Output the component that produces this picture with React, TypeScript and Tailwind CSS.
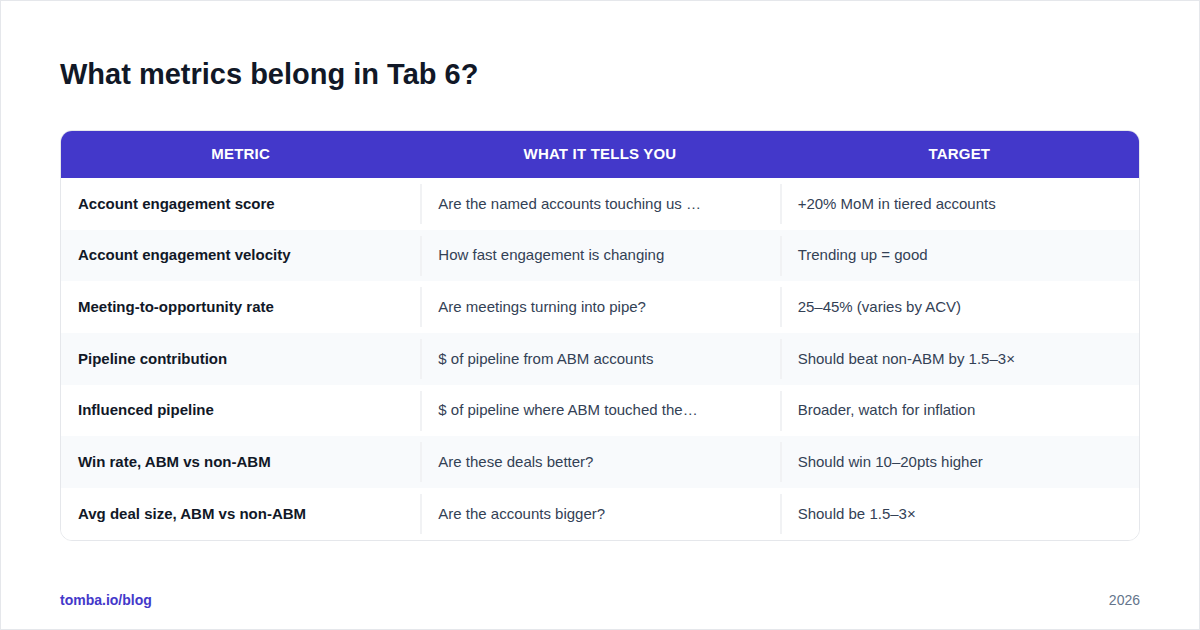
const rows = [
  ['Account engagement score', 'Are the named accounts touching us …', '+20% MoM in tiered accounts'],
  ['Account engagement velocity', 'How fast engagement is changing', 'Trending up = good'],
  ['Meeting-to-opportunity rate', 'Are meetings turning into pipe?', '25–45% (varies by ACV)'],
  ['Pipeline contribution', '$ of pipeline from ABM accounts', 'Should beat non-ABM by 1.5–3×'],
  ['Influenced pipeline', '$ of pipeline where ABM touched the…', 'Broader, watch for inflation'],
  ['Win rate, ABM vs non-ABM', 'Are these deals better?', 'Should win 10–20pts higher'],
  ['Avg deal size, ABM vs non-ABM', 'Are the accounts bigger?', 'Should be 1.5–3×'],
]

export default function App() {
  return (
    <div
      className="w-[1200px] h-[630px] bg-white border border-[#e5e7eb] flex flex-col px-[59px] pt-[54px] pb-[18px]"
      style={{ fontFamily: '"Liberation Sans", Arial, sans-serif' }}
    >
      <h1 className="text-[29px] leading-[38px] font-bold text-[#111827]">
        What metrics belong in Tab 6?
      </h1>

      {/* Table */}
      <div className="mt-[37px] rounded-[12px] border border-[#e5e7eb] overflow-hidden">
        <div className="grid grid-cols-3 bg-[#4338ca] h-[47px] items-center text-white text-[15px] font-bold tracking-[0.2px]">
          <div className="text-center">METRIC</div>
          <div className="text-center">WHAT IT TELLS YOU</div>
          <div className="text-center">TARGET</div>
        </div>
        {rows.map((r, i) => (
          <div
            key={r[0]}
            className={`grid grid-cols-3 h-[51.7px] items-center text-[15px] ${i % 2 === 1 ? 'bg-[#f8fafc]' : 'bg-white'}`}
          >
            <div className="pl-[17px] font-bold text-[#111827]">{r[0]}</div>
            <div className="h-[40px] flex items-center border-l-2 border-[#f1f2f4] pl-[16px] text-[#334155]">{r[1]}</div>
            <div className="h-[40px] flex items-center border-l-2 border-[#f1f2f4] pl-[16px] text-[#334155]">{r[2]}</div>
          </div>
        ))}
      </div>

      <div className="mt-auto flex justify-between items-center">
        <span className="text-[14px] font-bold text-[#4338ca]">tomba.io/blog</span>
        <span className="text-[14px] text-[#64748b]">2026</span>
      </div>
    </div>
  )
}
